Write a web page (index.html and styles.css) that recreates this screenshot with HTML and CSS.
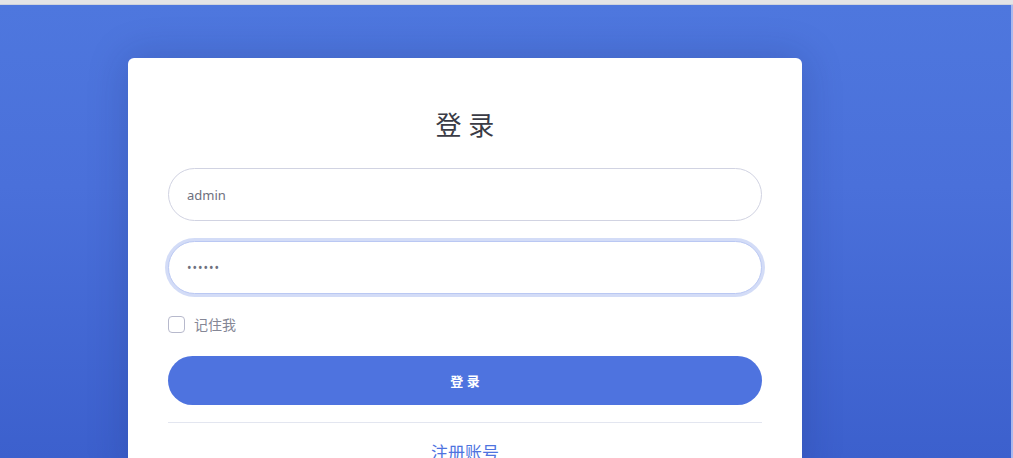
FILE: index.html
```html
<!DOCTYPE html>
<html lang="zh-CN">
<head>
    <meta charset="utf-8">
    <title>登录</title>
    <link rel="stylesheet" href="styles.css">
</head>
<body>
    <div class="topbar"></div>
    <div class="bg-main">
        <div class="login-card">
            <h1 class="login-title">登 录</h1>
            <form class="login-form">
                <input class="form-input" type="text" value="admin">
                <input class="form-input focus" type="password" value="123456">
                <label class="remember">
                    <span class="check-box"></span>
                    <span>记住我</span>
                </label>
                <button class="btn-login" type="button">登 录</button>
            </form>
            <hr class="divider">
            <div class="register"><a href="#">注册账号</a></div>
        </div>
    </div>
</body>
</html>
```

FILE: styles.css
```css
* {
    margin: 0;
    padding: 0;
    box-sizing: border-box;
}

html,
body {
    height: 100%;
    overflow: hidden;
}

body {
    font-family: "Noto Sans", "Noto Sans CJK SC", sans-serif;
    background: #fff;
    display: flex;
    flex-direction: column;
}

.topbar {
    flex-shrink: 0;
    height: 5px;
    background: #e4e4e6;
    border-bottom: 1px solid #cfd3dc;
}

.bg-main {
    flex: 1;
    min-height: 0;
    overflow: hidden;
    background: linear-gradient(180deg, #4e77de 0%, #4a70da 40%, #3c60cd 100%);
    border-right: 2px solid #a9b9ef;
    padding: 53px 0 0 128px;
}

.login-card {
    width: 674px;
    height: 420px;
    background: #fff;
    border-radius: 6px;
    box-shadow: 0 0 40px rgba(20, 30, 90, 0.22);
    padding: 52px 40px 0;
}

.login-title {
    font-size: 26px;
    font-weight: 400;
    color: #3a3b45;
    text-align: center;
    line-height: 31px;
    margin-bottom: 27px;
}

.login-form {
    display: flex;
    flex-direction: column;
}

.form-input {
    height: 53px;
    border: 1px solid #d1d3e2;
    border-radius: 27px;
    padding: 0 18px;
    font-family: "Noto Sans", sans-serif;
    font-size: 13px;
    color: #6e707e;
    outline: none;
    margin-bottom: 20px;
}

.form-input.focus {
    border-color: #bac8f3;
    box-shadow: 0 0 0 3px rgba(78, 115, 223, 0.25);
    font-size: 12px;
    letter-spacing: 1px;
}

.remember {
    display: flex;
    align-items: center;
    gap: 9px;
    height: 24px;
    margin-top: -2px;
    font-size: 14px;
    color: #858796;
}

.check-box {
    width: 17px;
    height: 17px;
    border: 1px solid #b7b9cc;
    border-radius: 4px;
}

.btn-login {
    margin-top: 20px;
    height: 49px;
    border: none;
    border-radius: 25px;
    background: #4e73df;
    color: #fff;
    font-family: "Noto Sans", "Noto Sans CJK SC", sans-serif;
    font-size: 13px;
    font-weight: 700;
}

.divider {
    border: none;
    border-top: 1px solid #e3e6f0;
    margin: 17px 0 16px;
}

.register {
    text-align: center;
    font-size: 17px;
}

.register a {
    color: #4e73df;
    text-decoration: none;
}
```
